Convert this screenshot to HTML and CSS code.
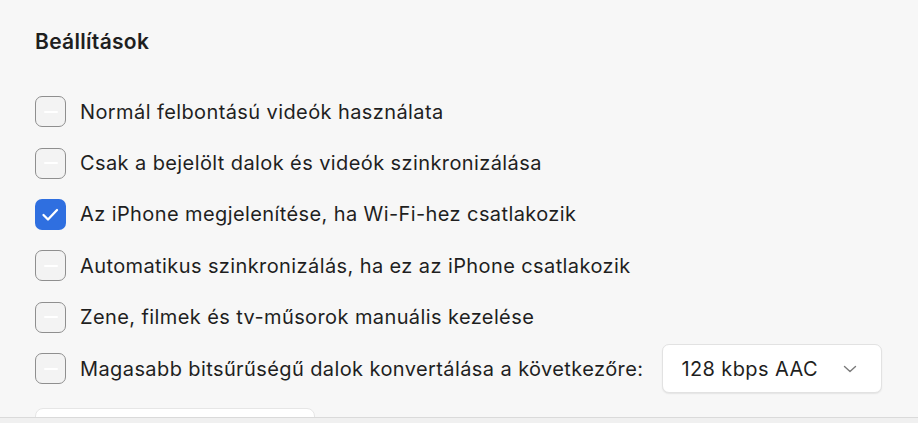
FILE: index.html
```html
<!DOCTYPE html>
<html lang="hu">
<head>
<meta charset="utf-8">
<title>Beállítások</title>
<link rel="stylesheet" href="styles.css">
</head>
<body>
<div class="pane">
  <h2 class="title">Beállítások</h2>
  <ul class="options">
    <li class="row">
      <span class="box"><span class="dash"></span></span>
      <span class="label">Normál felbontású videók használata</span>
    </li>
    <li class="row">
      <span class="box"><span class="dash"></span></span>
      <span class="label">Csak a bejelölt dalok és videók szinkronizálása</span>
    </li>
    <li class="row">
      <span class="box checked">
        <svg class="check" viewBox="0 0 31 31" width="31" height="31"><polyline points="8.5,16 13,20.5 22,11" fill="none" stroke="#fff" stroke-width="2.3" stroke-linecap="round" stroke-linejoin="round"/></svg>
      </span>
      <span class="label">Az iPhone megjelenítése, ha Wi-Fi-hez csatlakozik</span>
    </li>
    <li class="row">
      <span class="box"><span class="dash"></span></span>
      <span class="label">Automatikus szinkronizálás, ha ez az iPhone csatlakozik</span>
    </li>
    <li class="row">
      <span class="box"><span class="dash"></span></span>
      <span class="label">Zene, filmek és tv-műsorok manuális kezelése</span>
    </li>
    <li class="row">
      <span class="box"><span class="dash"></span></span>
      <span class="label">Magasabb bitsűrűségű dalok konvertálása a következőre:</span>
      <span class="select">
        <span class="select-text">128 kbps AAC</span>
        <svg class="chev" viewBox="0 0 14 8" width="14" height="8"><polyline points="1.5,1.5 7,6.5 12.5,1.5" fill="none" stroke="#7a7a7a" stroke-width="1.4" stroke-linecap="round" stroke-linejoin="round"/></svg>
      </span>
    </li>
  </ul>
  <div class="button-stub"></div>
</div>
<div class="footer"></div>
</body>
</html>
```
FILE: styles.css
```css
html, body {
  margin: 0;
  padding: 0;
  background: #f7f7f7;
}
body {
  font-family: Inter, "Noto Sans", "Liberation Sans", sans-serif;
  color: #1f1f1f;
  width: 918px;
  height: 423px;
  overflow: hidden;
}
.pane {
  height: 417px;
  overflow: hidden;
  padding: 0 35px;
  box-sizing: border-box;
}
.title {
  margin: 0;
  padding-top: 29px;
  font-size: 21px;
  line-height: 26px;
  font-weight: 600;
  letter-spacing: 0.3px;
}
.options {
  list-style: none;
  margin: 31px 0 0 0;
  padding: 0;
}
.row {
  height: 51.4px;
  display: flex;
  align-items: center;
}
.box {
  width: 31px;
  height: 31px;
  box-sizing: border-box;
  border: 1.5px solid #8f8f8f;
  border-radius: 7px;
  background: #f3f3f3;
  display: flex;
  align-items: center;
  justify-content: center;
  flex: none;
}
.dash {
  width: 14px;
  height: 2px;
  border-radius: 1px;
  background: #ffffff;
}
.box.checked {
  border: none;
  background: #2f6fe0;
}
.check {
  display: block;
}
.label {
  margin-left: 14px;
  font-size: 20px;
  letter-spacing: 0.4px;
  white-space: nowrap;
}
.select {
  margin-left: 19px;
  width: 220px;
  height: 49px;
  box-sizing: border-box;
  background: #ffffff;
  border: 1px solid #e2e2e2;
  border-radius: 7px;
  box-shadow: 0 1px 1.5px rgba(0, 0, 0, 0.08);
  display: flex;
  align-items: center;
  padding: 0 24px 0 18px;
  justify-content: space-between;
}
.select-text {
  font-size: 20px;
  letter-spacing: 0.4px;
}
.chev {
  display: block;
}
.button-stub {
  margin-top: 14px;
  width: 280px;
  height: 40px;
  box-sizing: border-box;
  background: #ffffff;
  border: 1px solid #e6e6e6;
  border-radius: 8px;
}
.footer {
  height: 6px;
  border-top: 1px solid #dadada;
  background: #f0f0f0;
}
```
